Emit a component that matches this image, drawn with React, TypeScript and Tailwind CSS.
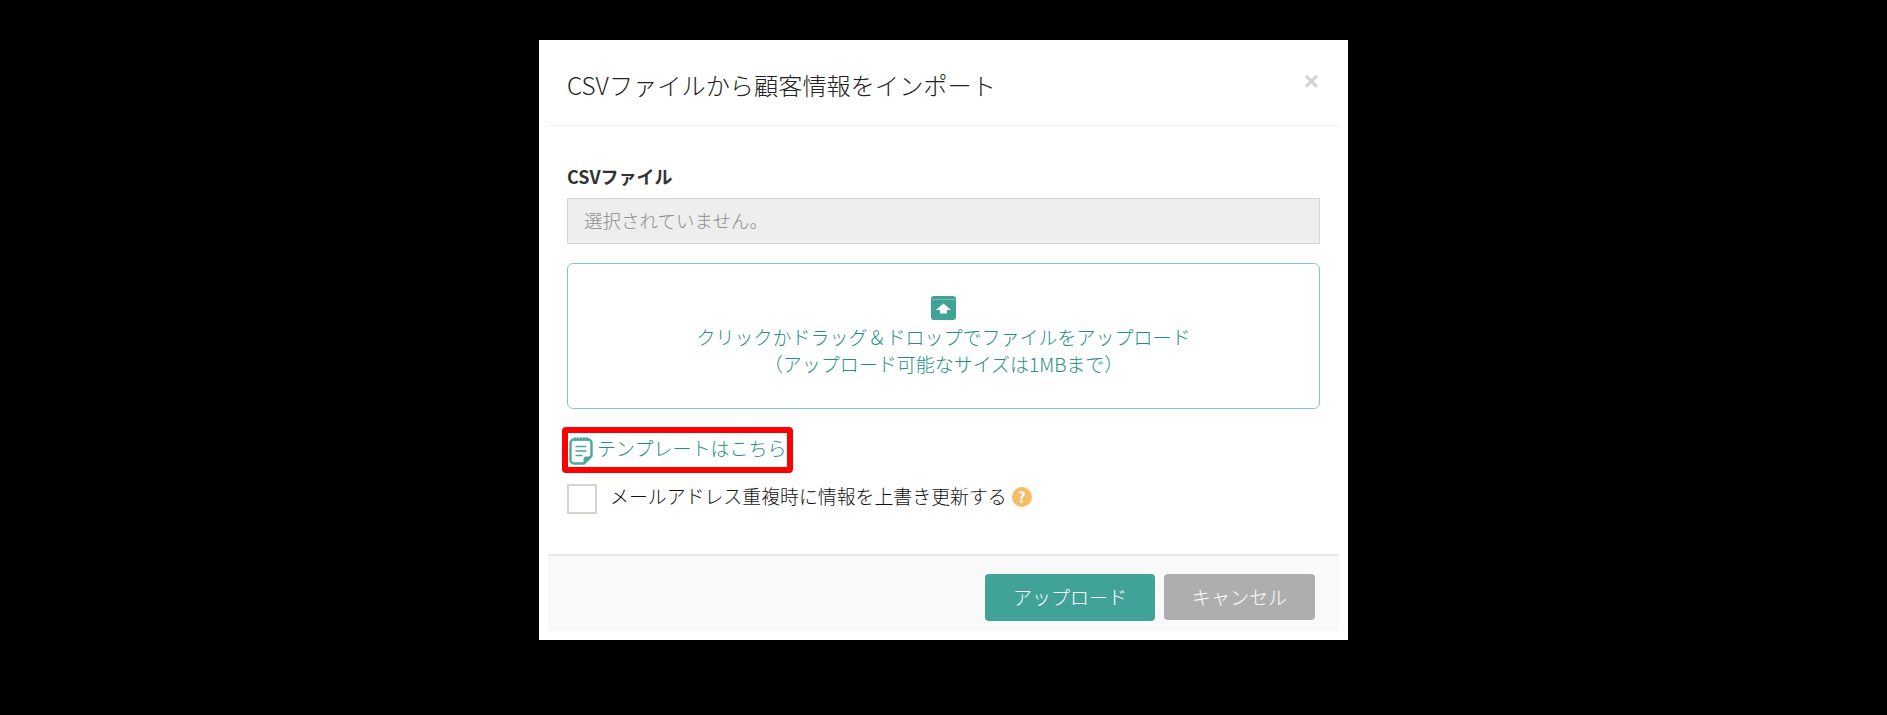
// CSV import modal
const NoteIcon = () => (
  <svg width="24" height="29" viewBox="0 0 24 29" fill="none" className="shrink-0">
    <path d="M5 3.500h14a3.500 3.500 0 0 1 3.500 3.500v13l-7.500 7.500h-10a3.500 3.500 0 0 1-3.500-3.500v-17a3.500 3.500 0 0 1 3.500-3.500z" stroke="#4aa89d" strokeWidth="2.400" />
    <path d="M22 20.500h-5a2.500 2.500 0 0 0-2.500 2.500v4.500z" fill="#4aa89d" />
    <path d="M6 1v4M9 1v4M12 1v4M15 1v4M18 1v4" stroke="#4aa89d" strokeWidth="1.300" />
    <path d="M6.500 10.500h11M6.500 15h11M6.500 19.500h7" stroke="#4aa89d" strokeWidth="1.700" />
  </svg>
);

const UploadIcon = () => (
  <svg width="25" height="24" viewBox="0 0 25 24">
    <path d="M3 0h19a3 3 0 0 1 3 3v18a3 3 0 0 1-3 3h-19a3 3 0 0 1-3-3v-18a3 3 0 0 1 3-3z" fill="#41a297" />
    <path d="M1 3.500h23" stroke="#fff" strokeOpacity="0.3" strokeWidth="1" />
    <path d="M12.500 7.500l7.500 6.500h-4v3.500h-7v-3.500h-4z" fill="#fff" />
  </svg>
);

export default function App() {
  return (
    <div className="min-h-[715px] bg-black flex justify-center items-start pt-[40px] font-['Noto_Sans_CJK_JP','Noto_Sans',sans-serif]">
      <div className="w-[809px] h-[600px] bg-white px-[9px] flex flex-col">
        <div className="h-[86px] border-b border-[#f0f0f0] flex items-start justify-between pl-[19px] pr-[20px] pt-[27px] shrink-0">
          <h1 className="text-[24.200px] leading-[36px] font-light text-[#222]">CSVファイルから顧客情報をインポート</h1>
          <span className="text-[26px] leading-[24px] font-bold text-[#d2d2d2] font-['Liberation_Sans',sans-serif] mt-[2px]">×</span>
        </div>

        <div className="flex-1 px-[19px] pt-[37px] flex flex-col">
          <label className="text-[18px] leading-[26px] font-bold text-[#333]">CSVファイル</label>
          <div className="mt-[9px] h-[46px] w-[753px] bg-[#eeeeee] border border-[#d0d4dc] flex items-center px-[16px] text-[18.500px] font-light text-[#8c8c8c]">
            選択されていません。
          </div>
          <div className="mt-[19px] h-[146px] w-[753px] border border-[#82c9bf] rounded-[6px] flex flex-col items-center pt-[32px] text-[#1f9184] text-[19px] font-light">
            <UploadIcon />
            <p className="mt-[3px] leading-[27px]">クリックかドラッグ＆ドロップでファイルをアップロード</p>
            <p className="leading-[27px]">（アップロード可能なサイズは1MBまで）</p>
          </div>

          <div className="mt-[18px] -ml-[5px] w-[231px] h-[46px] border-[6px] border-[#ff0000] rounded-[4px] flex items-center pl-[1px] gap-[4px] text-[#1f9184] text-[19px] font-light">
            <NoteIcon />
            <span className="whitespace-nowrap -mt-[3px]">テンプレートはこちら</span>
          </div>

          <div className="mt-[11px] flex items-start">
            <span className="w-[30px] h-[30px] border-2 border-[#d6d3cc] bg-white shrink-0" />
            <span className="ml-[13px] -mt-[1px] text-[18.900px] leading-[26px] font-light text-[#111] whitespace-nowrap">メールアドレス重複時に情報を上書き更新する</span>
            <span className="ml-[5px] mt-[3px] w-[20px] h-[20px] rounded-full bg-[#f7bc68] text-white text-[15px] leading-[20px] font-bold text-center">?</span>
          </div>
        </div>

        <div className="h-[77px] border-t-2 border-[#e8e8e8] bg-[#f9f9f9] flex items-start justify-end gap-[9px] pr-[24px] pt-[18px] mb-[9px] shrink-0">
          <button className="w-[170px] h-[47px] bg-[#41a297] rounded-[4px] text-white text-[19px] font-light">アップロード</button>
          <button className="w-[151px] h-[46px] bg-[#aeaeae] rounded-[4px] text-white text-[19px] font-light">キャンセル</button>
        </div>
      </div>
    </div>
  );
}
